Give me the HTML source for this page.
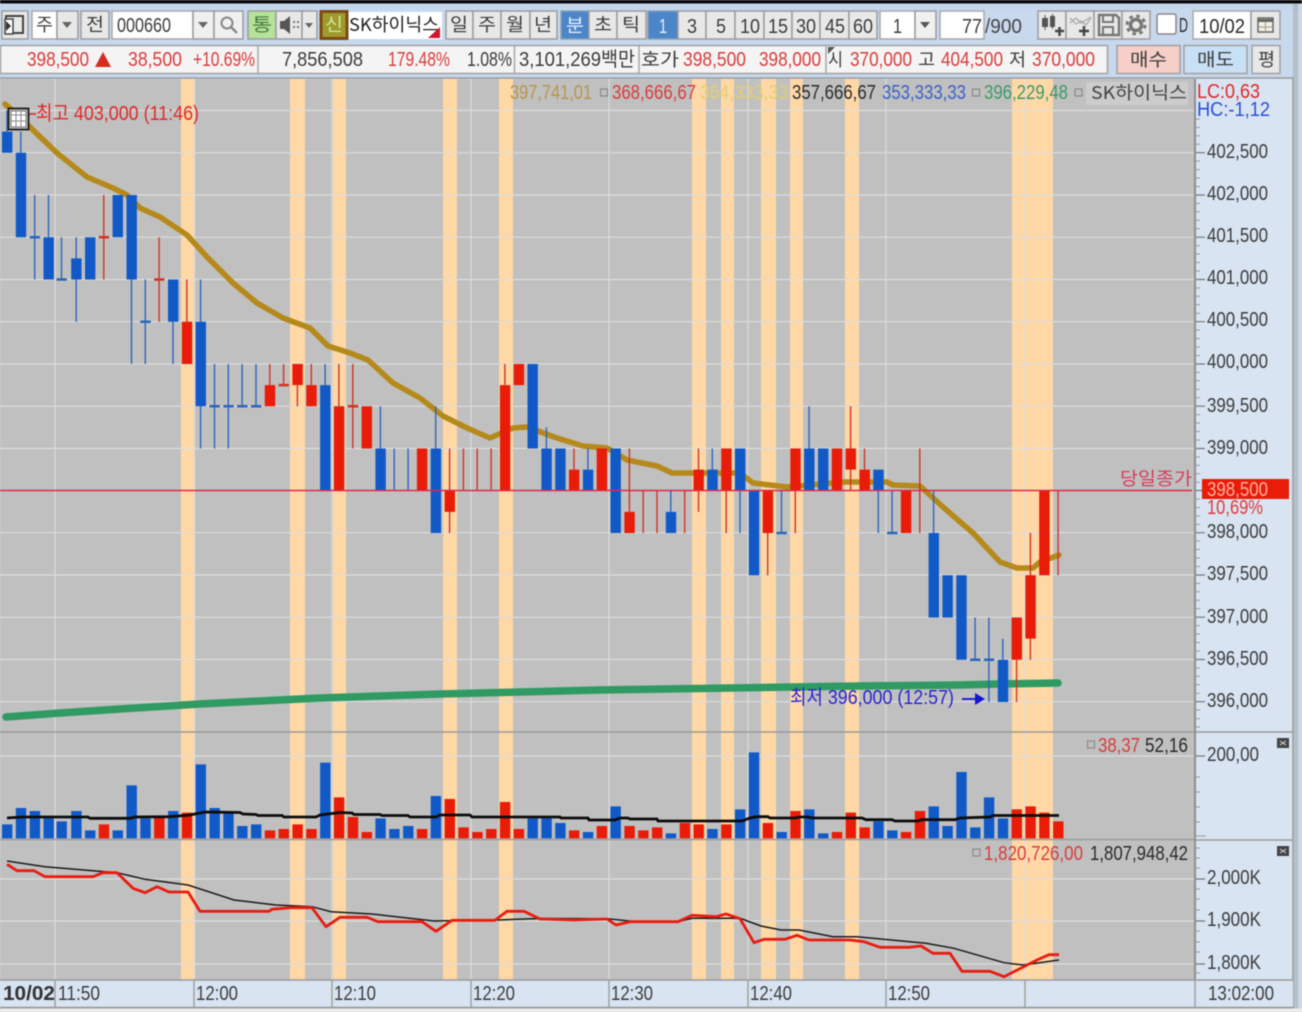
<!DOCTYPE html>
<html lang="ko"><head><meta charset="utf-8"><title>SK하이닉스</title>
<style>
html,body{margin:0;padding:0;width:1302px;height:1012px;overflow:hidden;background:#c8d9ee}
svg{display:block;filter:blur(.5px)}
text{font-family:"Liberation Sans","Noto Sans CJK KR",sans-serif;font-size:20px;fill:#3c3c3c}
.k{font-family:"Noto Sans CJK KR","Liberation Sans",sans-serif;font-size:18px}
.r{fill:#d83c3c}.b{fill:#3a5fc8}.g{fill:#3d9a68}.y{fill:#b8964a}.d{fill:#2a2a2a}
.btn{fill:#e8e8e8;stroke:#9c9c9c;stroke-width:1.5}
.w{fill:#fff;stroke:#a8a8a8;stroke-width:1.5}
.sq{fill:none;stroke:#8a8a8a;stroke-width:1.2}
</style></head><body>
<svg width="1302" height="1012" viewBox="0 0 1302 1012" xmlns="http://www.w3.org/2000/svg">
<rect width="1302" height="1012" fill="#c8d9ee"/>
<rect width="1302" height="3.5" fill="#0a0a0a"/>
<rect y="3.5" width="1302" height="6" fill="#c4d6ec"/>

<!-- toolbar -->
<g>
<rect class="btn" x="2" y="11" width="26" height="28"/>
<path d="M6 16h17v17H6z" fill="none" stroke="#444" stroke-width="2"/><path d="M5 19h8v15H5z" fill="#fff" stroke="#444" stroke-width="1.5"/><path d="M6 21l5 5-5 5z" fill="#333"/>
<rect class="w" x="32" y="11" width="25" height="28"/><text class="k" x="36" y="31" textLength="17" lengthAdjust="spacingAndGlyphs">주</text>
<rect class="btn" x="57" y="11" width="21" height="28"/><path d="M62 22h10l-5 6z" fill="#666"/>
<rect class="btn" x="81" y="11" width="28" height="28"/><text class="k" x="86" y="31" textLength="18" lengthAdjust="spacingAndGlyphs">전</text>
<rect class="w" x="112" y="11" width="81" height="28"/><text x="117" y="32" textLength="54" lengthAdjust="spacingAndGlyphs">000660</text>
<rect class="btn" x="193" y="11" width="21" height="28" style="fill:#f0f0f0"/><path d="M198 22h10l-5 6z" fill="#666"/>
<rect class="btn" x="214" y="11" width="29" height="28" style="fill:#f0f0f0"/><circle cx="227" cy="23" r="5.5" fill="none" stroke="#888" stroke-width="2"/><path d="M231 27l6 6" stroke="#888" stroke-width="2.5"/>
<rect class="btn" x="248" y="11" width="28" height="28" style="fill:#b6e29a"/><text class="k" x="252" y="31" textLength="20" lengthAdjust="spacingAndGlyphs" style="fill:#447a3c">통</text>
<rect class="btn" x="276" y="11" width="26" height="28"/><path d="M280 21h4l6-5v18l-6-5h-4z" fill="#555"/><path d="M293 21h2v2h-2zM297 21h2v2h-2zM293 26h2v2h-2zM297 26h2v2h-2z" fill="#777"/>
<rect class="btn" x="302" y="11" width="15" height="28"/><path d="M305 23h8l-4 5z" fill="#666"/>
<rect x="348" y="12" width="94" height="27" fill="#fff"/>
<rect x="321" y="11.5" width="26" height="27" fill="#a09a2c" stroke="#7c4a14" stroke-width="3"/><text class="k" x="325" y="31" textLength="18" lengthAdjust="spacingAndGlyphs" style="fill:#cfe89a">신</text>
<text class="k" x="349" y="31" textLength="90" lengthAdjust="spacingAndGlyphs" style="fill:#222">SK하이닉스</text>
<path d="M440 27v11h-12z" fill="#d4142a"/>
<rect class="btn" x="446" y="11" width="27" height="28"/><text class="k" x="450" y="31" textLength="18" lengthAdjust="spacingAndGlyphs">일</text>
<rect class="btn" x="473" y="11" width="28" height="28"/><text class="k" x="478" y="31" textLength="18" lengthAdjust="spacingAndGlyphs">주</text>
<rect class="btn" x="501" y="11" width="29" height="28"/><text class="k" x="506" y="31" textLength="18" lengthAdjust="spacingAndGlyphs">월</text>
<rect class="btn" x="530" y="11" width="27" height="28"/><text class="k" x="534" y="31" textLength="18" lengthAdjust="spacingAndGlyphs">년</text>
<rect x="561" y="11" width="28" height="28" fill="#4c86c8" stroke="#8aa0b8" stroke-width="1.5"/><text class="k" x="566" y="32" textLength="18" lengthAdjust="spacingAndGlyphs" style="fill:#e8f0ff">분</text>
<rect class="btn" x="589" y="11" width="28" height="28"/><text class="k" x="594" y="31" textLength="18" lengthAdjust="spacingAndGlyphs">초</text>
<rect class="btn" x="617" y="11" width="29" height="28"/><text class="k" x="622" y="31" textLength="18" lengthAdjust="spacingAndGlyphs">틱</text>
<rect x="648" y="11" width="30" height="28" fill="#4c86c8" stroke="#8aa0b8" stroke-width="1.5"/><text x="659" y="33" style="fill:#e8f0ff" textLength="8" lengthAdjust="spacingAndGlyphs">1</text>
<rect class="btn" x="678" y="11" width="28" height="28"/><text x="687" y="33" textLength="10" lengthAdjust="spacingAndGlyphs">3</text>
<rect class="btn" x="706" y="11" width="29" height="28"/><text x="716" y="33" textLength="10" lengthAdjust="spacingAndGlyphs">5</text>
<rect class="btn" x="735" y="11" width="29" height="28"/><text x="740" y="33" textLength="20" lengthAdjust="spacingAndGlyphs">10</text>
<rect class="btn" x="764" y="11" width="28" height="28"/><text x="768" y="33" textLength="20" lengthAdjust="spacingAndGlyphs">15</text>
<rect class="btn" x="792" y="11" width="28" height="28"/><text x="796" y="33" textLength="20" lengthAdjust="spacingAndGlyphs">30</text>
<rect class="btn" x="820" y="11" width="29" height="28"/><text x="825" y="33" textLength="20" lengthAdjust="spacingAndGlyphs">45</text>
<rect class="btn" x="849" y="11" width="28" height="28"/><text x="853" y="33" textLength="20" lengthAdjust="spacingAndGlyphs">60</text>
<rect class="w" x="880" y="11" width="35" height="28"/><text x="893" y="33" textLength="9" lengthAdjust="spacingAndGlyphs">1</text>
<rect class="btn" x="915" y="11" width="21" height="28" style="fill:#f0f0f0"/><path d="M920 22h10l-5 6z" fill="#555"/>
<rect class="w" x="940" y="11" width="44" height="28"/><text x="962" y="33" textLength="20" lengthAdjust="spacingAndGlyphs">77</text>
<text x="985" y="33" textLength="37" lengthAdjust="spacingAndGlyphs" style="fill:#444">/900</text>
<rect class="btn" x="1038" y="11" width="28" height="28"/>
<path d="M1042 18h6v9h-6zM1050 16h5v11h-5z" fill="#555"/><path d="M1045 15v15M1052.5 14v15" stroke="#555"/><path d="M1055 31h9M1059.5 27v9" stroke="#444" stroke-width="2.5"/>
<rect class="btn" x="1066" y="11" width="28" height="28"/>
<path d="M1070 18l6 6 5-3 5 4 5-7M1070 23l6-5 5 5 5-3 5-3" fill="none" stroke="#aaa" stroke-width="1.3"/><path d="M1079 31h10M1084 26v10" stroke="#444" stroke-width="2.5"/>
<rect class="btn" x="1094" y="11" width="28" height="28"/>
<path d="M1099 15h17l3 3v17h-20z" fill="none" stroke="#777" stroke-width="2.5"/><path d="M1103 15v7h10v-7M1103 35v-8h10v8" fill="none" stroke="#777" stroke-width="2"/>
<rect class="btn" x="1122" y="11" width="28" height="28"/>
<circle cx="1136" cy="25" r="5.5" fill="none" stroke="#777" stroke-width="3.5"/><circle cx="1136" cy="25" r="9" fill="none" stroke="#777" stroke-width="3" stroke-dasharray="3.5 3.57"/>
<rect x="1157" y="14" width="19" height="20" rx="2" fill="#fff" stroke="#888" stroke-width="1.5"/>
<text x="1179" y="32" textLength="9" lengthAdjust="spacingAndGlyphs" class="d">D</text>
<rect class="w" x="1193" y="11" width="58" height="28"/><text x="1199" y="33" textLength="46" lengthAdjust="spacingAndGlyphs" class="d">10/02</text>
<rect class="btn" x="1251" y="11" width="29" height="28"/><path d="M1258 18h15v14h-15z" fill="#f4f0e0" stroke="#666" stroke-width="1.5"/><path d="M1258 19h15v3h-15z" fill="#666"/><path d="M1265.5 22v10M1258 27h15" stroke="#999"/>
</g>

<!-- row 2 -->
<rect x=".5" y="45.5" width="1107" height="28" fill="#f4f4f4" stroke="#a0a0a0" stroke-width="1.5"/>
<path d="M258 46v27M514.5 46v27M639 46v27M826 46v27" stroke="#a8a8a8" stroke-width="1.5"/>
<text class="r" x="27" y="66" textLength="62" lengthAdjust="spacingAndGlyphs">398,500</text>
<path d="M95 67l8-15 8 15z" fill="#d62c20"/>
<text class="r" x="128" y="66" textLength="54" lengthAdjust="spacingAndGlyphs">38,500</text>
<text class="r" x="193" y="66" textLength="62" lengthAdjust="spacingAndGlyphs">+10.69%</text>
<text x="282" y="66" textLength="81" lengthAdjust="spacingAndGlyphs">7,856,508</text>
<text class="r" x="388" y="66" textLength="62" lengthAdjust="spacingAndGlyphs">179.48%</text>
<text x="467" y="66" textLength="45" lengthAdjust="spacingAndGlyphs">1.08%</text>
<text x="519" y="66" textLength="116" lengthAdjust="spacingAndGlyphs">3,101,269백만</text>
<text class="k" x="641" y="66" textLength="38" lengthAdjust="spacingAndGlyphs">호가</text>
<text class="r" x="683" y="66" textLength="63" lengthAdjust="spacingAndGlyphs">398,500</text>
<text class="r" x="759" y="66" textLength="62" lengthAdjust="spacingAndGlyphs">398,000</text>
<text class="k" x="828" y="66" textLength="15" lengthAdjust="spacingAndGlyphs">시</text>
<path d="M828 47h7l-7 7z" fill="#555"/>
<text class="r" x="850" y="66" textLength="62" lengthAdjust="spacingAndGlyphs">370,000</text>
<text class="k" x="918" y="66" textLength="17" lengthAdjust="spacingAndGlyphs">고</text>
<text class="r" x="941" y="66" textLength="62" lengthAdjust="spacingAndGlyphs">404,500</text>
<text class="k" x="1009" y="66" textLength="17" lengthAdjust="spacingAndGlyphs">저</text>
<text class="r" x="1032" y="66" textLength="63" lengthAdjust="spacingAndGlyphs">370,000</text>
<rect x="1117" y="45.5" width="63" height="28" fill="#f6cfc8" stroke="#a0a0a0" stroke-width="1.5"/>
<text class="k" x="1130" y="66" textLength="37" lengthAdjust="spacingAndGlyphs">매수</text>
<rect x="1184" y="45.5" width="63" height="28" fill="#c8e0f6" stroke="#a0a0a0" stroke-width="1.5"/>
<text class="k" x="1197" y="66" textLength="37" lengthAdjust="spacingAndGlyphs">매도</text>
<rect x="1252" y="45.5" width="28" height="28" fill="#e8e8e8" stroke="#a0a0a0" stroke-width="1.5"/>
<text class="k" x="1258" y="66" textLength="17" lengthAdjust="spacingAndGlyphs">평</text>

<!-- chart bg -->
<rect x="0" y="78" width="1293" height="930" fill="#d8e4f2" stroke="#9a9a9a" stroke-width="1.5"/>
<rect x="0" y="79" width="1195" height="901" fill="#c0c0c0"/>
<rect x="1293" y="3.5" width="5" height="1008" fill="#aaa" opacity=".55"/>

<!-- bands -->
<g fill="#ffd8a6">
<rect x="181" y="79" width="14" height="901"/><rect x="290" y="79" width="15" height="901"/><rect x="333" y="79" width="13" height="901"/><rect x="443" y="79" width="14" height="901"/><rect x="499" y="79" width="14" height="901"/><rect x="692" y="79" width="14" height="901"/><rect x="721" y="79" width="13" height="901"/><rect x="761" y="79" width="15" height="901"/><rect x="790" y="79" width="13" height="901"/><rect x="845" y="79" width="14" height="901"/><rect x="1012" y="79" width="41" height="901"/>
</g>

<!-- grid -->
<g stroke="#dcdcdc" stroke-width="1.2" fill="none">
<path d="M55 79V980M194 79V980M332 79V980M471 79V980M609 79V980M748 79V980M886 79V980M1025 79V980"/>
<path d="M0 110.5H1195M0 152.7H1195M0 195H1195M0 237.2H1195M0 279.5H1195M0 321.7H1195M0 364H1195M0 406.2H1195M0 448.5H1195M0 532.7H1195M0 575H1195M0 617.2H1195M0 659.5H1195M0 701.7H1195"/>
<path d="M0 756H1195M0 879H1195M0 921H1195M0 964H1195"/>
</g>
<path d="M0 732H1195M0 839.5H1195" stroke="#9a9a9a" stroke-width="1.5"/>

<!-- price MAs -->
<polyline fill="none" stroke="#b5891a" stroke-width="5.5" stroke-linejoin="round" stroke-linecap="round" points="5,104 20,117 33,130 57,153 87,177 113,188 127,195 140,208 160,217 187,235 207,257 233,283 257,303 283,318 310,328 328,346 350,353 368,360 393,383 420,398 443,416 467,428 490,438 513,428 527,427 557,438 583,446 607,448 627,460 657,466 672,473 700,473 740,473 753,483 787,487 843,482 887,482 893,485 920,486 943,507 973,533 1000,562 1017,568 1033,568 1040,562 1059,555"/>
<polyline fill="none" stroke="#2f9a62" stroke-width="7.5" stroke-linejoin="round" stroke-linecap="round" points="6,717 60,713 120,709 200,704 320,698 440,694 600,690 730,688 860,686 960,685 1000,684 1058,683"/>

<!-- candles -->
<g transform="translate(0,110.5) scale(1,42.25)">
<path fill="#2c66bc" d="M6.3 0h1.4V.5h-1.4zM20.1 .5h1.4V1h-1.4zM34 2h1.4V4h-1.4zM29.7 2.97h10.4v.06h-10.4zM47.8 2h1.4V3h-1.4zM60.8 3h1.4V4h-1.4zM56.5 3.97h10.4v.06h-10.4zM75.5 3h1.4V5h-1.4zM130.8 4h1.4V6h-1.4zM144.6 4h1.4V6h-1.4zM140.3 4.97h10.4v.06h-10.4zM172.3 5h1.4V6h-1.4zM199.9 4h1.4V8h-1.4zM213.8 6h1.4V8h-1.4zM209.5 6.97h10.4v.06h-10.4zM227.6 6h1.4V8h-1.4zM223.3 6.97h10.4v.06h-10.4zM241.4 6h1.4V7h-1.4zM237.1 6.97h10.4v.06h-10.4zM255.3 6h1.4V7h-1.4zM251 6.97h10.4v.06H251zM324.4 6h1.4V6.5h-1.4zM379.7 7h1.4V8h-1.4zM393.5 8h1.4V9h-1.4zM407.4 8h1.4V9h-1.4zM435 7h1.4V8H435zM545.7 7.5h1.4V8h-1.4zM587.2 8h1.4V8.5h-1.4zM670.1 9h1.4V9.5h-1.4zM711.6 8h1.4V8.5h-1.4zM739.3 9h1.4V10h-1.4zM780.8 9h1.4V10h-1.4zM776.5 9.97h10.4v.06h-10.4zM808.4 7h1.4V8h-1.4zM877.6 9h1.4V10h-1.4zM891.4 9h1.4V10h-1.4zM887.1 9.97h10.4v.06h-10.4zM932.9 9h1.4V10h-1.4zM974.4 12h1.4V13h-1.4zM970.1 12.97h10.4v.06h-10.4zM988.2 12h1.4V14h-1.4zM983.9 12.97h10.4v.06h-10.4zM1002.1 12.5h1.4V13h-1.4z"/>
<path fill="#d03424" d="M103.1 2h1.4V4h-1.4zM98.8 2.97h10.4v.06H98.8zM158.4 3h1.4V5h-1.4zM154.1 3.97h10.4v.06h-10.4zM186.1 4h1.4V5h-1.4zM269.1 6h1.4V6.5h-1.4zM282.9 6h1.4V6.5h-1.4zM278.6 6.47h10.4v.06h-10.4zM296.7 6.5h1.4V7h-1.4zM310.6 6h1.4V6.5h-1.4zM338.2 6h1.4V7h-1.4zM352.1 6h1.4V8h-1.4zM347.8 6.97h10.4v.06h-10.4zM448.9 8h1.4V10h-1.4zM462.7 8h1.4V9h-1.4zM476.5 8h1.4V9h-1.4zM490.4 8h1.4V9h-1.4zM504.2 6h1.4V6.5h-1.4zM573.3 8h1.4V8.5h-1.4zM628.7 8h1.4V9.5h-1.4zM642.5 9h1.4V10h-1.4zM656.3 9h1.4V10h-1.4zM684 9h1.4V10H684zM697.8 8h1.4V9.5h-1.4zM725.5 9h1.4V10h-1.4zM767 10h1.4V11H767zM794.6 9h1.4V10h-1.4zM849.9 7h1.4V9h-1.4zM863.8 8h1.4V8.5h-1.4zM919.1 8h1.4V10h-1.4zM1015.9 13h1.4V14h-1.4zM1029.7 10h1.4V13h-1.4zM1057.4 9h1.4V11h-1.4z"/>
<path fill="#1259c8" d="M2 .5h10.4V1H2zM15.8 1h10.4V3H15.8zM43.5 3h10.4V4H43.5zM71.2 3.5h10.4V4H71.2zM85 3h10.4V4H85zM112.6 2h10.4V3h-10.4zM126.5 2h10.4V4h-10.4zM168 4h10.4V5H168zM195.6 5h10.4V7h-10.4zM320.1 6.5h10.4V9h-10.4zM375.4 8h10.4V9h-10.4zM430.7 8h10.4V10h-10.4zM527.5 6h10.4V8h-10.4zM541.4 8h10.4V9h-10.4zM555.2 8h10.4V9h-10.4zM582.9 8.5h10.4V9h-10.4zM610.5 8h10.4V10h-10.4zM665.8 9.5h10.4V10h-10.4zM707.3 8.5h10.4V9h-10.4zM735 8h10.4V9H735zM748.8 9h10.4V11h-10.4zM804.1 8h10.4V9h-10.4zM818 8h10.4V9H818zM873.3 8.5h10.4V9h-10.4zM928.6 10h10.4V12h-10.4zM942.4 11h10.4V12h-10.4zM956.3 11h10.4V13h-10.4zM997.8 13h10.4V14h-10.4z"/>
<path fill="#e81c08" d="M181.8 5h10.4V6h-10.4zM264.8 6.5h10.4V7h-10.4zM292.4 6h10.4V6.5h-10.4zM306.3 6.5h10.4V7h-10.4zM333.9 7h10.4V9h-10.4zM361.6 7h10.4V8h-10.4zM416.9 8h10.4V9h-10.4zM444.6 9h10.4V9.5h-10.4zM499.9 6.5h10.4V9h-10.4zM513.7 6h10.4V6.5h-10.4zM569 8.5h10.4V9H569zM596.7 8h10.4V9h-10.4zM624.4 9.5h10.4V10h-10.4zM693.5 8.5h10.4V9h-10.4zM721.2 8h10.4V9h-10.4zM762.7 9h10.4V10h-10.4zM790.3 8h10.4V9h-10.4zM831.8 8h10.4V9h-10.4zM845.6 8h10.4V8.5h-10.4zM859.5 8.5h10.4V9h-10.4zM900.9 9h10.4V10h-10.4zM1011.6 12h10.4V13h-10.4zM1025.4 11h10.4V12.5h-10.4zM1039.2 9h10.4V11h-10.4z"/>
</g>
<path d="M0 490.5H1192" stroke="#e0284a" stroke-width="1.5"/>

<!-- volume bars -->
<g transform="translate(0,730) scale(1,.33333)">
<path fill="#1259c8" d="M2 283h10.4V325H2zM15.8 234h10.4V325H15.8zM29.7 243h10.4V325H29.7zM43.5 265h10.4V325H43.5zM56.5 274h10.4V325H56.5zM71.2 243h10.4V325H71.2zM85 301h10.4V325H85zM112.6 301h10.4V325H112.6zM126.5 166h10.4V325H126.5zM140.3 265h10.4V325H140.3zM168 243h10.4V325H168zM195.6 103h10.4V325H195.6zM209.5 234h10.4V325H209.5zM223.3 248h10.4V325H223.3zM237.1 288h10.4V325H237.1zM251 283h10.4V325H251zM320.1 98h10.4V325H320.1zM375.4 265h10.4V325H375.4zM389.2 297h10.4V325H389.2zM403.1 288h10.4V325H403.1zM430.7 198h10.4V325H430.7zM527.5 265h10.4V325H527.5zM541.4 265h10.4V325H541.4zM555.2 279h10.4V325H555.2zM582.9 306h10.4V325H582.9zM610.5 229h10.4V325H610.5zM665.8 310h10.4V325H665.8zM707.3 297h10.4V325H707.3zM735 238h10.4V325H735zM748.8 67h10.4V325H748.8zM776.5 306h10.4V325H776.5zM804.1 238h10.4V325H804.1zM818 310h10.4V325H818zM873.3 274h10.4V325H873.3zM887.1 301h10.4V325H887.1zM928.6 229h10.4V325H928.6zM942.4 288h10.4V325H942.4zM956.3 126h10.4V325H956.3zM970.1 292h10.4V325H970.1zM983.9 202h10.4V325H983.9zM997.8 265h10.4V325H997.8z"/>
<path fill="#e81c08" d="M98.8 283h10.4V325H98.8zM154.1 261h10.4V325H154.1zM181.8 248h10.4V325H181.8zM264.8 301h10.4V325H264.8zM278.6 297h10.4V325H278.6zM292.4 283h10.4V325H292.4zM306.3 297h10.4V325H306.3zM333.9 202h10.4V325H333.9zM347.8 261h10.4V325H347.8zM361.6 306h10.4V325H361.6zM416.9 297h10.4V325H416.9zM444.6 207h10.4V325H444.6zM458.4 292h10.4V325H458.4zM472.2 306h10.4V325H472.2zM486.1 297h10.4V325H486.1zM499.9 216h10.4V325H499.9zM513.7 297h10.4V325H513.7zM569 301h10.4V325H569zM596.7 288h10.4V325H596.7zM624.4 288h10.4V325H624.4zM638.2 301h10.4V325H638.2zM652 292h10.4V325H652zM679.7 279h10.4V325H679.7zM693.5 283h10.4V325H693.5zM721.2 283h10.4V325H721.2zM762.7 279h10.4V325H762.7zM790.3 243h10.4V325H790.3zM831.8 306h10.4V325H831.8zM845.6 248h10.4V325H845.6zM859.5 292h10.4V325H859.5zM900.9 306h10.4V325H900.9zM914.8 243h10.4V325H914.8zM1011.6 238h10.4V325H1011.6zM1025.4 229h10.4V325H1025.4zM1039.2 248h10.4V325H1039.2zM1053.1 274h10.4V325H1053.1z"/>
</g>
<polyline fill="none" stroke="#0c0c0c" stroke-width="2.8" points="7,818 22,817 88,817 90,818.3 130,818.3 135,817 170,816.7 190,815 205,812 240,812.5 243,814 256,814.5 258,815.5 282,815.5 284,817 316,817 320,815 340,812.5 352,813 354,814.5 380,814.5 382,815.5 408,815.5 410,817 436,817 440,815 470,815 472,817 540,817 560,817 561,818 588,818 589,820 615,820 620,818 628,818 630,819 657,819 658,821 742,821 750,818 757,816.7 768,816.7 770,818 795,818 800,817 808,817 812,818 862,818 866,819.7 892,819.7 895,821 918,821 922,819.7 955,819.7 960,818 990,817 993,815.5 1059,815.5"/>

<!-- lower lines -->
<polyline fill="none" stroke="#1a1a1a" stroke-width="1.5" points="7,861 45,866.7 117,872.7 145,879.3 188,885 234,900 276,905 312,906.7 331,911.7 372,914 434,921 497,920 540,918.5 607,918.7 637,921.7 678,921.7 692,918.3 740,918.3 761,926 781,930 799,930 833,936.7 857,936.7 926,943.3 954,948.3 1004,962.7 1023,965 1059,960"/>
<polyline fill="none" stroke="#e81c10" stroke-width="2.8" stroke-linejoin="round" points="7,864.3 17,870.7 34,870.7 45,876.7 93,876.7 103,872.7 117,872.7 133,888.3 145,892.7 157,886.7 169,892 188,892 200,911.3 269,911.3 272,909.3 290,907.7 312,907.7 326,926.7 340,917.3 367,917.3 378,921.7 422,921.7 436,931.3 452,920.3 495,920.3 507,911.3 524,911.3 540,919 574,920 607,919 616,925 630,921.7 678,921.7 692,915.3 716,916.7 726,914 740,918.7 754,942.7 764,939.3 785,939.3 797,935.3 809,940 850,940 864,941.7 880,947.3 909,947.3 921,946 933,953.3 950,953.3 962,971.3 990,971.3 1004,976.7 1037,960 1049,954.7 1059,954.7"/>

<!-- chart labels -->
<text class="y" x="510" y="99" textLength="82" lengthAdjust="spacingAndGlyphs">397,741,01</text>
<rect class="sq" x="600.5" y="89" width="7" height="7"/>
<text class="r" x="612" y="99" textLength="84" lengthAdjust="spacingAndGlyphs">368,666,67</text>
<text x="700" y="99" textLength="88" lengthAdjust="spacingAndGlyphs" style="fill:#e2d070">364,333,33</text>
<text x="792" y="99" textLength="84" lengthAdjust="spacingAndGlyphs" class="d">357,666,67</text>
<text class="b" x="882" y="99" textLength="84" lengthAdjust="spacingAndGlyphs">353,333,33</text>
<rect class="sq" x="972.5" y="89" width="7" height="7"/>
<text class="g" x="984" y="99" textLength="84" lengthAdjust="spacingAndGlyphs">396,229,48</text>
<rect class="sq" x="1075" y="89" width="7" height="7"/>
<rect x="1086" y="82" width="102" height="23" fill="#cccccc"/>
<text class="k" x="1091" y="99" textLength="96" lengthAdjust="spacingAndGlyphs" style="fill:#444">SK하이닉스</text>
<text class="r" x="1197" y="98" textLength="63" lengthAdjust="spacingAndGlyphs" style="fill:#e02828">LC:0,63</text>
<text x="1197" y="116" textLength="73" lengthAdjust="spacingAndGlyphs" style="fill:#2a50d8">HC:-1,12</text>

<path d="M28 114h8" stroke="#d02828" stroke-width="1.5"/>
<text class="r" x="36" y="120" textLength="163" lengthAdjust="spacingAndGlyphs" style="fill:#e02828">최고 403,000 (11:46)</text>
<rect x="8.5" y="108.5" width="20" height="21" fill="#c8c8c8" stroke="#1a1a1a" stroke-width="1.8"/>
<path d="M11 111h15v16H11z" fill="#fff" stroke="#777"/><path d="M11 115h15M11 121h15M16 111v16M21 111v16" stroke="#888"/>
<text x="790" y="704" textLength="164" lengthAdjust="spacingAndGlyphs" style="fill:#2a24d0">최저 396,000 (12:57)</text>
<path d="M962 699h15" stroke="#1515d8" stroke-width="1.8"/><path d="M975 693l10 6-10 6z" fill="#1515d8"/>
<text x="1120" y="485" textLength="72" lengthAdjust="spacingAndGlyphs" class="k" style="fill:#d83c5c">당일종가</text>

<rect class="sq" x="1087.5" y="741" width="7" height="7"/>
<text class="r" x="1098" y="752" textLength="42" lengthAdjust="spacingAndGlyphs">38,37</text>
<text x="1145" y="752" textLength="43" lengthAdjust="spacingAndGlyphs" class="d">52,16</text>
<rect class="sq" x="973" y="849" width="7" height="7"/>
<text class="r" x="984" y="860" textLength="99" lengthAdjust="spacingAndGlyphs">1,820,726,00</text>
<text x="1090" y="860" textLength="98" lengthAdjust="spacingAndGlyphs" class="d">1,807,948,42</text>

<!-- right axis -->
<path d="M1195 79V1007" stroke="#8e8e8e" stroke-width="2"/>
<path d="M1196 152.7h9M1196 195h9M1196 237.2h9M1196 279.5h9M1196 321.7h9M1196 364h9M1196 406.2h9M1196 448.5h9M1196 490.5h9M1196 532.7h9M1196 575h9M1196 617.2h9M1196 659.5h9M1196 701.7h9M1196 756h9M1196 879h9M1196 921h9M1196 964h9" stroke="#777" stroke-width="1.2"/>
<path d="M1196 119h4M1196 127.4h4M1196 135.9h4M1196 144.3h4M1196 161.1h4M1196 169.6h4M1196 178h4M1196 186.5h4M1196 203.4h4M1196 211.8h4M1196 220.3h4M1196 228.7h4M1196 245.6h4M1196 254h4M1196 262.5h4M1196 271h4M1196 288h4M1196 296.3h4M1196 304.7h4M1196 313.2h4M1196 330h4M1196 338.6h4M1196 347h4M1196 355.5h4M1196 372.4h4M1196 380.8h4M1196 389.3h4M1196 397.7h4M1196 414.6h4M1196 423h4M1196 431.5h4M1196 440h4M1196 457h4M1196 465.3h4M1196 473.7h4M1196 482.2h4M1196 499h4M1196 507.5h4M1196 516h4M1196 524.4h4M1196 541h4M1196 549.5h4M1196 558h4M1196 566.5h4M1196 583.4h4M1196 591.8h4M1196 600.3h4M1196 608.7h4M1196 625.6h4M1196 634h4M1196 642.5h4M1196 651h4M1196 668h4M1196 676.3h4M1196 684.7h4M1196 693.2h4M1196 710h4M1196 718.6h4M1196 727h4M1196 777h4M1196 792h4M1196 807h4M1196 822h4M1196 836h10M1196 848h4M1196 858h4M1196 868h4M1196 889h4M1196 899h4M1196 910h4M1196 931h4M1196 942h4M1196 952h4M1196 973h4" stroke="#999" stroke-width="1"/>
<g>
<text x="1207" y="158" textLength="61" lengthAdjust="spacingAndGlyphs">402,500</text>
<text x="1207" y="200" textLength="61" lengthAdjust="spacingAndGlyphs">402,000</text>
<text x="1207" y="242" textLength="61" lengthAdjust="spacingAndGlyphs">401,500</text>
<text x="1207" y="284" textLength="61" lengthAdjust="spacingAndGlyphs">401,000</text>
<text x="1207" y="326" textLength="61" lengthAdjust="spacingAndGlyphs">400,500</text>
<text x="1207" y="368" textLength="61" lengthAdjust="spacingAndGlyphs">400,000</text>
<text x="1207" y="412" textLength="61" lengthAdjust="spacingAndGlyphs">399,500</text>
<text x="1207" y="454" textLength="61" lengthAdjust="spacingAndGlyphs">399,000</text>
<text x="1207" y="538" textLength="61" lengthAdjust="spacingAndGlyphs">398,000</text>
<text x="1207" y="580" textLength="61" lengthAdjust="spacingAndGlyphs">397,500</text>
<text x="1207" y="623" textLength="61" lengthAdjust="spacingAndGlyphs">397,000</text>
<text x="1207" y="665" textLength="61" lengthAdjust="spacingAndGlyphs">396,500</text>
<text x="1207" y="707" textLength="61" lengthAdjust="spacingAndGlyphs">396,000</text>
<text x="1207" y="761" textLength="52" lengthAdjust="spacingAndGlyphs">200,00</text>
<text x="1207" y="884" textLength="54" lengthAdjust="spacingAndGlyphs">2,000K</text>
<text x="1207" y="926" textLength="54" lengthAdjust="spacingAndGlyphs">1,900K</text>
<text x="1207" y="969" textLength="54" lengthAdjust="spacingAndGlyphs">1,800K</text>
</g>
<rect x="1202" y="479" width="87" height="20" fill="#e81c08"/>
<text x="1207" y="496" textLength="61" lengthAdjust="spacingAndGlyphs" style="fill:#ffb0a0">398,500</text>
<text class="r" x="1207" y="514" textLength="56" lengthAdjust="spacingAndGlyphs" style="fill:#e03a3a">10,69%</text>
<rect x="1277" y="738" width="12" height="10" fill="#444"/><path d="M1280 741l6 4M1286 741l-6 4" stroke="#ddd"/>
<rect x="1277" y="846" width="12" height="10" fill="#444"/><path d="M1280 849l6 4M1286 849l-6 4" stroke="#ddd"/>
<path d="M1195 732H1293M1195 840H1293" stroke="#9a9a9a" stroke-width="1.5"/>

<!-- x axis -->
<rect x="0" y="980" width="1293" height="27" fill="#d8e4f2"/>
<path d="M0 980H1293M0 1007.5H1293" stroke="#9a9a9a" stroke-width="1.5"/>
<path d="M55 980v27M194 980v27M332 980v27M471 980v27M609 980v27M748 980v27M886 980v27M1025 980v27M1195 980v27" stroke="#a0a0a0" stroke-width="1.5"/>
<text x="3" y="1000" textLength="52" lengthAdjust="spacingAndGlyphs" style="font-weight:bold;fill:#333">10/02</text>
<text x="58" y="1000" textLength="42" lengthAdjust="spacingAndGlyphs">11:50</text>
<text x="196" y="1000" textLength="42" lengthAdjust="spacingAndGlyphs">12:00</text>
<text x="334" y="1000" textLength="42" lengthAdjust="spacingAndGlyphs">12:10</text>
<text x="473" y="1000" textLength="42" lengthAdjust="spacingAndGlyphs">12:20</text>
<text x="611" y="1000" textLength="42" lengthAdjust="spacingAndGlyphs">12:30</text>
<text x="750" y="1000" textLength="42" lengthAdjust="spacingAndGlyphs">12:40</text>
<text x="888" y="1000" textLength="42" lengthAdjust="spacingAndGlyphs">12:50</text>
<text x="1208" y="1000" textLength="66" lengthAdjust="spacingAndGlyphs">13:02:00</text>
<rect x="0" y="1008.5" width="1302" height="4" fill="#eeeeee"/>
</svg>
</body></html>
